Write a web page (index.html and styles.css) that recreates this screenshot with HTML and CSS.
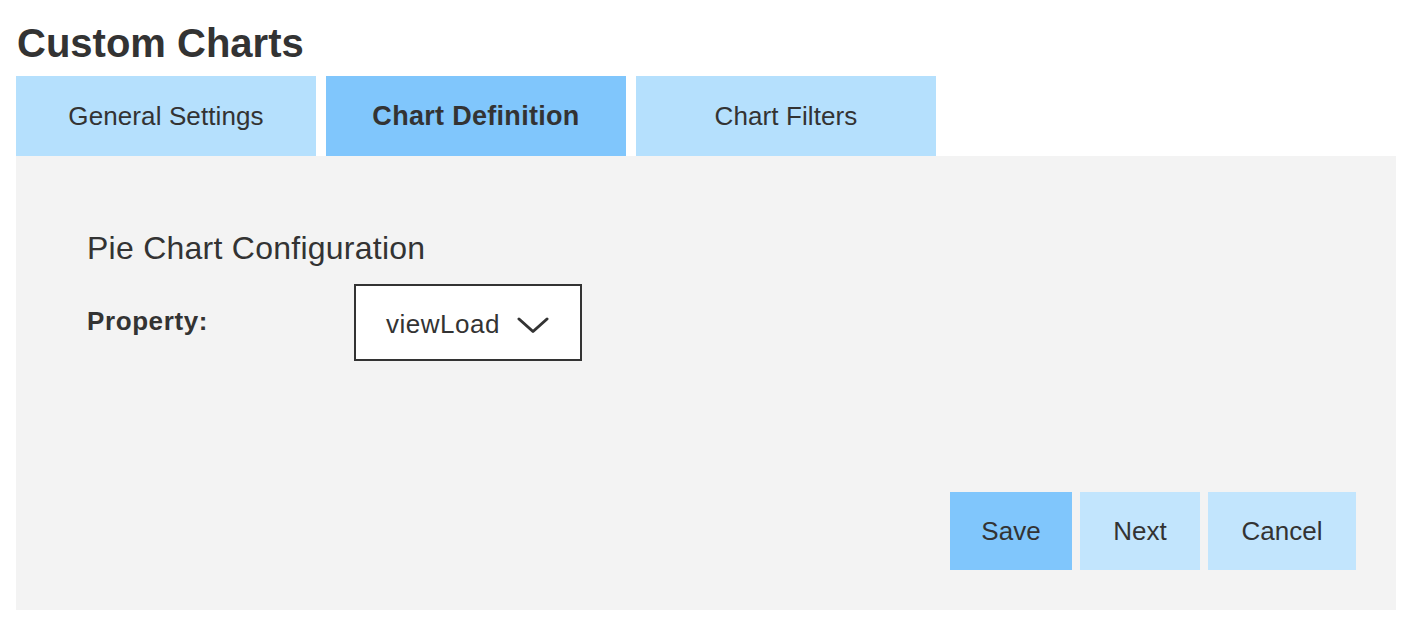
FILE: index.html
```html
<!DOCTYPE html>
<html>
<head>
<meta charset="utf-8">
<link rel="stylesheet" href="styles.css">
</head>
<body>
<div class="page">
  <h1 class="title">Custom Charts</h1>
  <div class="tabs">
    <div class="tab">General Settings</div>
    <div class="tab active">Chart Definition</div>
    <div class="tab">Chart Filters</div>
  </div>
  <div class="panel">
    <h2 class="section-title">Pie Chart Configuration</h2>
    <div class="form-row">
      <label class="label">Property:</label>
      <div class="select">
        <span class="select-value">viewLoad</span>
        <svg class="chevron" width="32" height="17" viewBox="0 0 32 17"><path d="M2 2 L16 14.5 L30 2" fill="none" stroke="#333" stroke-width="3" stroke-linecap="round" stroke-linejoin="round"/></svg>
      </div>
    </div>
    <div class="actions">
      <button class="btn primary">Save</button>
      <button class="btn">Next</button>
      <button class="btn wide">Cancel</button>
    </div>
  </div>
</div>
</body>
</html>
```

FILE: styles.css
```css
html, body {
  margin: 0;
  padding: 0;
  background: #ffffff;
}
body {
  font-family: "Liberation Sans", Arial, sans-serif;
  color: #333333;
}
.page {
  padding: 23px 18px 0 16px;
}
.title {
  margin: 0 0 13px 1px;
  font-size: 40px;
  line-height: 40px;
  font-weight: bold;
  color: #333333;
}
.tabs {
  display: flex;
  gap: 10px;
}
.tab {
  width: 300px;
  height: 80px;
  display: flex;
  align-items: center;
  justify-content: center;
  background: #b5e0fd;
  font-size: 26px;
  letter-spacing: 0.1px;
  color: #333333;
}
.tab.active {
  background: #80c6fc;
  font-weight: bold;
  font-size: 27px;
  letter-spacing: 0.3px;
}
.panel {
  background: #f3f3f3;
  height: 454px;
  box-sizing: border-box;
  padding: 74px 40px 40px 71px;
  display: flex;
  flex-direction: column;
}
.section-title {
  margin: 0;
  font-size: 32px;
  line-height: 36px;
  font-weight: normal;
  letter-spacing: 0.25px;
  color: #333333;
}
.form-row {
  display: flex;
  align-items: center;
  margin-top: 18px;
}
.label {
  width: 267px;
  font-size: 26px;
  font-weight: bold;
  letter-spacing: 0.6px;
  margin-top: -2px;
}
.select {
  width: 228px;
  height: 77px;
  box-sizing: border-box;
  border: 2px solid #333333;
  background: #ffffff;
  display: flex;
  align-items: center;
  padding-left: 30px;
  gap: 17px;
}
.select-value {
  font-size: 26px;
  letter-spacing: 0.5px;
  margin-top: 3px;
}
.chevron {
  display: block;
  margin-top: 5px;
}
.actions {
  margin-top: auto;
  display: flex;
  justify-content: flex-end;
  gap: 8px;
}
.btn {
  border: none;
  margin: 0;
  width: 120px;
  height: 78px;
  background: #c2e5fd;
  font-family: "Liberation Sans", Arial, sans-serif;
  font-size: 26px;
  color: #333333;
  padding: 0;
}
.btn.primary {
  width: 122px;
  background: #80c6fc;
}
.btn.wide {
  width: 148px;
}
```
